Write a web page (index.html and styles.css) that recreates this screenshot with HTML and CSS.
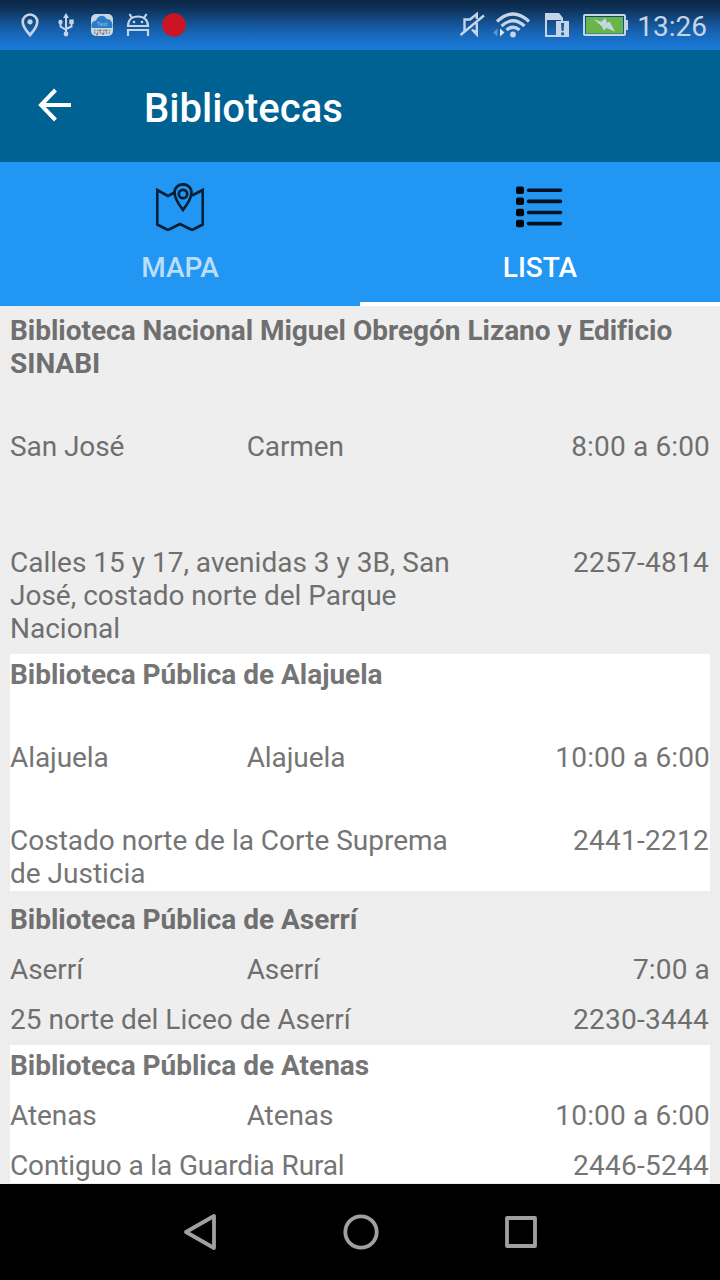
FILE: index.html
```html
<!DOCTYPE html>
<html lang="es">
<head>
    <meta charset="UTF-8">
    <meta name="viewport" content="width=device-width, initial-scale=1.0">
    <title>Bibliotecas</title>
    <link rel="stylesheet" href="styles.css">
</head>
<body>
    <div class="status-bar">
        <div class="status-icons">
            <svg width="18" height="24" viewBox="0 0 18 24"><path d="M9 1.5a7.3 7.3 0 0 0-7.3 7.3C1.7 14 9 22 9 22s7.3-8 7.3-13.2A7.3 7.3 0 0 0 9 1.5z" fill="none" stroke="#c5d5e6" stroke-width="2.6"/><circle cx="9" cy="8.8" r="2.6" fill="#c5d5e6"/></svg>
            <svg width="16" height="24" viewBox="0 0 16 24" fill="none" stroke="#c5d5e6" stroke-width="2"><path d="M8 3v17M2.5 9v4.500L8 17M13.500 9v4.500L8 16"/><path d="M8 0l3 5H5z" fill="#c5d5e6" stroke="none"/><circle cx="2.5" cy="9" r="2.2" fill="#c5d5e6" stroke="none"/><path d="M11.300 6.500h4.400v4.500h-4.400z" fill="#c5d5e6" stroke="none"/><circle cx="8" cy="21" r="2.4" fill="#c5d5e6" stroke="none"/></svg>
            <svg width="22" height="22" viewBox="0 0 22 22"><rect width="22" height="22" rx="5" fill="#c9d7e2"/><path d="M1 14C-1 10 2 7 5 6.500 7 1 13 0 15.500 5c4-.5 7 4 5.500 9z" fill="#2a7cc8"/><text x="11" y="11.500" text-anchor="middle" class="app-icon-text">Test</text><g fill="none" stroke-width="1.500"><path d="M3 16.500h16" stroke="#4d9a78" stroke-dasharray="1.500 1.500"/><path d="M3 19h16" stroke="#6a8f9a" stroke-dasharray="1.500 1.500"/><path d="M8 16.500h2M14 16.500h2M5 20.500h2M11 20h2" stroke="#c8506a"/></g></svg>
            <svg width="24" height="24" viewBox="0 0 24 24" fill="none" stroke="#c5d5e6" stroke-width="2.2"><path d="M2 13C2 7 6 3.500 12 3.500S22 7 22 13zM6 5L3.500 1M18 5l2.500-4M2 23v-6h20v6"/><circle cx="8" cy="9" r="1.300" fill="#c5d5e6" stroke="none"/><circle cx="16" cy="9" r="1.300" fill="#c5d5e6" stroke="none"/></svg>
            <svg width="24" height="24" viewBox="0 0 24 24"><circle cx="12" cy="12" r="11.800" fill="#cb1524"/></svg>
        </div>
        <div class="status-right">
            <svg class="mute" width="26" height="28" viewBox="0 0 26 28" fill="none" stroke="#c5d5e6" stroke-width="2.4"><path d="M1.500 24L25 4.500"/><path d="M5.500 20V8.500h5.500L17.800 3v5"/><path d="M17.800 12v11.500L13 18.500"/><path d="M19 19v7l-6-7z" fill="#c5d5e6" stroke="none"/></svg>
            <svg class="wifi" width="38" height="26" viewBox="0 0 38 26" fill="none" stroke="#c5d5e6" stroke-width="3.200"><path d="M4 9.500Q20 -5.500 36 9.500M8.500 14Q20 3.500 31.500 14M13.500 18Q20 12.500 26.500 18"/><circle cx="20" cy="22.500" r="2.900" fill="#c5d5e6" stroke="none"/><path d="M0 20.500l4.500-4v8z" fill="#5f93cb" stroke="none"/><path d="M11.500 20.500l-4.500-4v8z" fill="#dce6ef" stroke="none"/></svg>
            <svg class="sim" width="24" height="24" viewBox="0 0 24 24"><path d="M1 23V1h12l4 5v3" fill="none" stroke="#c5d5e6" stroke-width="2"/><path d="M1 0h13l4 5v2H1zM11 8h13v16H11zM0 22h11v2H0z" fill="#c5d5e6"/><path d="M16 10h3.200l-.6 8h-2zM16.200 19.500h2.800v2.700h-2.800z" fill="#1b5da6"/></svg>
            <svg class="battery" width="45" height="22" viewBox="0 0 45 22"><rect x="1" y="1" width="41" height="20" rx="1" fill="none" stroke="#c5d5e6" stroke-width="2"/><path d="M43 6h2v10h-2z" fill="#c5d5e6"/><rect x="3" y="3" width="37" height="16.500" fill="#68b647"/><path d="M10.500 5l7.500 2.800L22.500 4l1.500 5 2.500-1.500L32 17.500l-8.500-3.500-3 2.500-1.500-4z" fill="#c5d5e6"/></svg>
            <span class="clock">13:26</span>
        </div>
    </div>

    <header class="toolbar">
        <svg class="back" width="34" height="34" viewBox="0 0 34 34" fill="none" stroke="#ffffff" stroke-width="4"><path d="M33 17H4M17.500 2L3 17l14.500 15"/></svg>
        <h1 class="toolbar-title">Bibliotecas</h1>
    </header>

    <nav class="tabs">
        <a class="tab">
            <svg width="48" height="48" viewBox="0 0 48 48" fill="none" stroke="#071f35" stroke-width="2.700"><path d="M18.500 9.500L12 13 1.200 7v34.500L12 47l12-6 12 6 10.800-5.500V7L36 12.500"/><path d="M27 1.300c-5 0-8.500 3.800-8.500 8.300C18.500 16 27 27 27 27s8.500-11 8.500-17.400c0-4.500-3.500-8.300-8.500-8.300z"/><circle cx="27" cy="11" r="4.200"/></svg>
            <span class="tab-label">MAPA</span>
        </a>
        <a class="tab active">
            <svg width="48" height="48" viewBox="0 0 48 48" fill="#020507"><rect y="3.500" width="8" height="7.500" rx="2"/><rect y="14.500" width="8" height="7.500" rx="2"/><rect y="25.700" width="8" height="7.500" rx="2"/><rect y="36.800" width="8" height="7.500" rx="2"/><path d="M12.500 7.300h32M12.500 18.400h32M12.500 29.500h32M12.500 40.600h32" stroke="#04111c" stroke-width="3.600" stroke-linecap="round"/></svg>
            <span class="tab-label">LISTA</span>
        </a>
    </nav>

    <main class="list">
        <div class="item">
            <h2 class="name">Biblioteca Nacional Miguel Obregón Lizano y Edificio SINABI</h2>
            <span class="place">San José</span>
            <span class="place">Carmen</span>
            <span class="hours">8:00 a 6:00</span>
            <p class="address">Calles 15 y 17, avenidas 3 y 3B, San José, costado norte del Parque Nacional</p>
            <span class="phone">2257-4814</span>
        </div>
        <div class="item white">
            <h2 class="name">Biblioteca Pública de Alajuela</h2>
            <span class="place">Alajuela</span>
            <span class="place">Alajuela</span>
            <span class="hours">10:00 a 6:00</span>
            <p class="address">Costado norte de la Corte Suprema de Justicia</p>
            <span class="phone">2441-2212</span>
        </div>
        <div class="item">
            <h2 class="name">Biblioteca Pública de Aserrí</h2>
            <span class="place">Aserrí</span>
            <span class="place">Aserrí</span>
            <span class="hours">7:00 a</span>
            <p class="address">25 norte del Liceo de Aserrí</p>
            <span class="phone">2230-3444</span>
        </div>
        <div class="item white">
            <h2 class="name">Biblioteca Pública de Atenas</h2>
            <span class="place">Atenas</span>
            <span class="place">Atenas</span>
            <span class="hours">10:00 a 6:00</span>
            <p class="address tight">Contiguo a la Guardia Rural</p>
            <span class="phone">2446-5244</span>
        </div>
    </main>

    <footer class="nav-bar">
        <svg width="36" height="40" viewBox="0 0 36 40"><path d="M31 4v32L3 20z"/></svg>
        <svg width="36" height="40" viewBox="0 0 36 40"><circle cx="18" cy="20" r="15.700"/></svg>
        <svg width="36" height="40" viewBox="0 0 36 40"><rect x="4" y="6" width="28" height="28"/></svg>
    </footer>
</body>
</html>
```

FILE: styles.css
```css
:root {
    --toolbar: #006293;
    --tabs: #2196f3;
    --background: #ededed;
    --item: #eeeeee;
    --white: #ffffff;
    --status-text: #c5d5e6;
}

* {
    margin: 0;
    padding: 0;
    box-sizing: border-box;
}

body {
    font-family: Roboto, sans-serif;
    height: 1280px;
    display: flex;
    flex-direction: column;
    overflow: hidden;
    background-color: var(--background);
}

svg {
    display: block;
    flex-shrink: 0;
}

.status-bar {
    height: 50px;
    flex-shrink: 0;
    display: flex;
    justify-content: space-between;
    align-items: center;
    padding: 0 12px 0 21px;
    background: linear-gradient(#0a2745 0%, #0d2d50 12%, #1760ac 60%, #1976d2 90%);
}

.status-icons {
    display: flex;
    align-items: center;
    gap: 12px;
}

.status-icons svg:nth-child(2) {
    margin: 0 5px 0 7px;
}

.status-icons svg:nth-child(4) {
    margin-left: 1px;
}

.app-icon-text {
    font-size: 5.5px;
    fill: #8fc0e8;
}

.status-right {
    display: flex;
    align-items: center;
}

.wifi {
    margin-left: 8px;
}

.sim {
    margin-left: 14px;
}

.battery {
    margin-left: 14px;
}

.clock {
    margin-left: 9px;
    margin-right: 1px;
    color: var(--status-text);
    font-size: 28px;
    line-height: 33px;
    padding-top: 2px;
}

.toolbar {
    height: 112px;
    flex-shrink: 0;
    display: flex;
    align-items: center;
    padding-left: 38px;
    background-color: var(--toolbar);
}

.back {
    margin-bottom: 2px;
}

.toolbar-title {
    margin: 4px 0 0 72px;
    color: var(--white);
    font-size: 40px;
    font-weight: 500;
    line-height: 47px;
}

.tabs {
    height: 144px;
    flex-shrink: 0;
    display: flex;
    background-color: var(--tabs);
}

.tab {
    flex: 1;
    display: flex;
    flex-direction: column;
    align-items: center;
    padding-top: 21px;
    color: rgba(255, 255, 255, 0.7);
    border-bottom: 4px solid transparent;
}

.tab.active {
    color: var(--white);
    border-bottom-color: var(--white);
}

.tab-label {
    margin-top: 20px;
    font-size: 28px;
    font-weight: 500;
    line-height: 33px;
}

.list {
    flex: 1;
    min-height: 0;
    overflow: hidden;
    display: flex;
    flex-direction: column;
    gap: 8px;
    padding: 4px 10px 0;
}

/* every row of an item is as tall as its tallest one */
.item {
    flex-shrink: 0;
    display: grid;
    grid-template-columns: repeat(3, 1fr);
    grid-auto-rows: 1fr;
    gap: 17px 10px;
    padding: 4px 0 1px;
    background-color: var(--item);
    color: #6f6f6f;
    font-size: 28px;
    line-height: 33px;
}

.item.white {
    background-color: var(--white);
    color: #757575;
}

.name {
    grid-column: 1 / -1;
    font-size: 28px;
    font-weight: 700;
    letter-spacing: -0.02px;
}

.place {
    letter-spacing: -0.08px;
}

.address {
    grid-column: span 2;
}

.address.tight {
    letter-spacing: -0.14px;
}

.hours,
.phone {
    text-align: right;
}

.hours {
    letter-spacing: 0.15px;
}

.phone {
    padding-right: 1px;
    letter-spacing: 0.25px;
}

.nav-bar {
    height: 96px;
    flex-shrink: 0;
    display: flex;
    justify-content: center;
    align-items: center;
    gap: 124px;
    padding-left: 2px;
    background-color: #000000;
}

.nav-bar svg {
    fill: none;
    stroke: #a0a0a0;
    stroke-width: 3.8;
    stroke-linejoin: round;
}
```
